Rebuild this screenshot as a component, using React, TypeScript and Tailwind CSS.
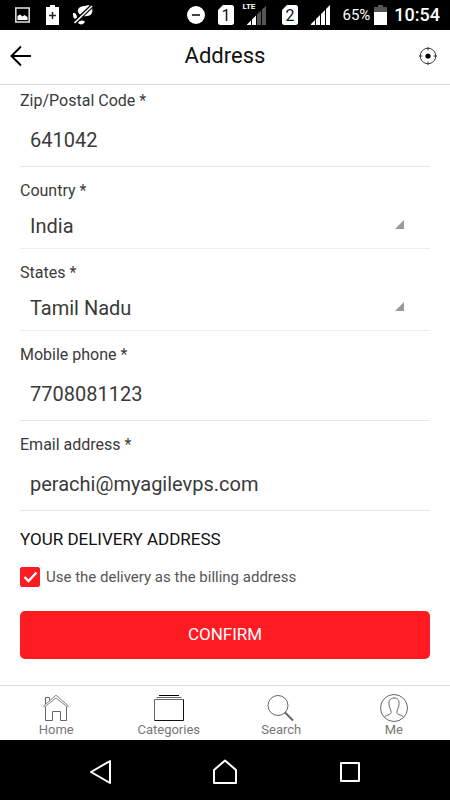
import { ReactNode } from "react";

function StatusBar() {
    return (
        <div className="flex h-[30px] items-center justify-between bg-black pl-[15px] pr-[10px] text-white">
            <div className="flex items-center">
                <svg className="h-[20px] w-[15px]" viewBox="0 0 15 20" fill="none">
                    <rect x="0.800" y="3" width="13.400" height="14" stroke="#d6d6d6" strokeWidth="1.600" />
                    <path d="M2.500 15V11L5 9.600L7.500 11.500L9.500 10L12.500 12V15Z" fill="#fff" />
                </svg>
                <svg className="ml-4 h-[20px] w-[13px]" viewBox="0 0 13 20">
                    <path d="M4 0H9V2H13V20H0V2H4Z" fill="#fff" />
                    <path d="M6.500 7V14M3 10.500H10" stroke="#222" strokeWidth="1.500" />
                </svg>
                <svg className="ml-[14px] h-[20px] w-[20px]" viewBox="0 0 20 20">
                    <path d="M5 7C4 3 8 1 12 1C14 0 17 0 19 2C20 7 19 11 14 11C11 12 7 11 5 7Z" fill="#fff" />
                    <path d="M0 8C3 8 4 10 4 13L2 14C0 13 0 11 0 8Z" fill="#fff" />
                    <path d="M5 18C7 15 10 15 12 17C10 20 7 20 5 18Z" fill="#fff" />
                    <path d="M1 18L19 1" stroke="#000" strokeWidth="4" />
                    <path d="M1.500 18L19 1" stroke="#fff" strokeWidth="1.600" />
                </svg>
            </div>
            <div className="flex items-center">
                <svg className="h-[18px] w-[18px]" viewBox="0 0 18 18">
                    <circle cx="9" cy="9" r="9" fill="#fff" />
                    <path d="M5 9H13" stroke="#111" strokeWidth="1.600" />
                </svg>
                <Sim number="1" />
                <div className="relative ml-2 h-[20px] w-[24px]">
                    <span className="absolute -top-[3px] left-0 text-[8px] font-bold leading-[10px]">LTE</span>
                    <svg className="absolute bottom-0 right-0 h-[19px] w-[19px]" viewBox="0 0 19 19">
                        <path d="M0 19V18.500L4 14.500V19ZM5 19V13.500L9 9.500V19Z" fill="#fff" />
                        <path d="M10 19V8.500L14 4.500V19ZM15 19V3.500L19 0V19Z" fill="#555" />
                    </svg>
                </div>
                <Sim number="2" wide />
                <svg className="ml-[13px] h-[20px] w-[19px]" viewBox="0 0 19 20">
                    <path d="M0 20V19L4 15V20ZM5 20V14L9 10V20ZM10 20V9L14 5V20ZM15 20V4L19 0V20Z" fill="#fff" />
                </svg>
                <span className="ml-3 text-[15px] leading-5">65%</span>
                <svg className="ml-1 h-[20px] w-[13px]" viewBox="0 0 13 20">
                    <path d="M4 0H9V2H13V8H0V2H4Z" fill="#555" />
                    <path d="M0 7H13V20H0Z" fill="#fff" />
                </svg>
                <span className="ml-[7px] text-lg font-medium leading-5">10:54</span>
            </div>
        </div>
    );
}

function Sim({ number, wide }: { number: string; wide?: boolean }) {
    return (
        <span className={wide ? "ml-4" : "ml-[13px]"}>
            <svg className="h-[20px] w-[16px]" viewBox="0 0 16 20">
                <path d="M5 0H13.500Q16 0 16 2.500V17.500Q16 20 13.500 20H2.500Q0 20 0 17.500V5Z" fill="#fff" />
                <text x="8" y="16" textAnchor="middle" fontSize="16" fill="#111">{number}</text>
            </svg>
        </span>
    );
}

function Header() {
    return (
        <header className="grid h-[55px] grid-cols-[1fr_auto_1fr] items-center border-b border-[#dcdcdc] px-[9px] pb-[2px]">
            <button type="button" aria-label="Back">
                <svg className="h-[24px] w-[24px]" viewBox="0 0 24 24" fill="none" stroke="#000" strokeWidth="2">
                    <path d="M22 12H3M12 2.500L2.500 12L12 21.500" />
                </svg>
            </button>
            <h1 className="text-[22px] leading-7 text-[#111]">Address</h1>
            <button type="button" aria-label="Locate me" className="justify-self-end pr-1">
                <svg className="h-[18px] w-[18px]" viewBox="0 0 18 18" fill="none" stroke="#111">
                    <circle cx="9" cy="9" r="7.800" strokeWidth="0.800" />
                    <circle cx="9" cy="9" r="2.600" fill="#000" stroke="none" />
                    <path d="M9 0V3.500M9 14.500V18M0 9H3.500M14.500 9H18" strokeWidth="0.800" />
                </svg>
            </button>
        </header>
    );
}

function Field({ id, label, value, type = "text" }: { id: string; label: string; value: string; type?: string }) {
    return (
        <div>
            <label htmlFor={id} className="block text-base leading-6">{label}</label>
            <input id={id} type={type} defaultValue={value} className="block h-[54px] w-full border-b border-[#e4e7ee] px-[10px] text-xl outline-none" />
        </div>
    );
}

function SelectField({ id, label, value }: { id: string; label: string; value: string }) {
    return (
        <div>
            <label htmlFor={id} className="block text-base leading-6">{label}</label>
            <div className="relative">
                <select id={id} defaultValue={value} className="block h-[46px] w-full appearance-none border-b border-[#ececec] px-[10px] text-xl outline-none">
                    <option>{value}</option>
                </select>
                <svg className="pointer-events-none absolute right-[26px] top-[17px] h-[9px] w-[9px]" viewBox="0 0 9 9">
                    <path d="M9 0V9H0Z" fill="#999" />
                </svg>
            </div>
        </div>
    );
}

function Tab({ label, children }: { label: string; children: ReactNode }) {
    return (
        <a href="#" className="flex flex-col items-center pt-2 text-[13px] leading-4 text-[#777]">
            <svg className="h-[28px] w-[32px]" viewBox="0 0 32 28" fill="none" stroke="#666">
                {children}
            </svg>
            {label}
        </a>
    );
}

function TabBar() {
    return (
        <nav className="grid h-[55px] grid-cols-4 border-t border-[#dcdcdc]">
            <Tab label="Home">
                <path d="M5.500 13V26.500H12.500V17.500H20.500V26.500H26.500V13" />
                <path d="M3.500 12L16 1.200L28.500 12L27.500 13L16 4L4.500 13Z" strokeWidth="0.800" />
                <path d="M5.500 10V3.500H9.500V6.500" />
            </Tab>
            <Tab label="Categories">
                <path d="M6 1.500H26" stroke="#000" />
                <path d="M3.500 3.500H28.500" />
                <path d="M1.500 26.500V5.500H30.500" />
                <path d="M30.500 5.500V26.500H1.500" stroke="#111" />
            </Tab>
            <Tab label="Search">
                <circle cx="13" cy="11.500" r="10" />
                <path d="M20 18.500L28 26.500" strokeWidth="2" />
            </Tab>
            <Tab label="Me">
                <circle cx="16" cy="14" r="13.500" />
                <path d="M6.500 23.500C7 21 13 21 13.200 18.500C13.200 16.500 11.500 14 11 11C10.500 6 12.500 4 16 4C19.500 4 21.500 6 21 11C20.500 14 18.800 16.500 18.800 18.500C19 21 25 21 25.500 23.500" />
            </Tab>
        </nav>
    );
}

function SystemNav() {
    return (
        <div className="grid h-[60px] grid-cols-3 items-center justify-items-center bg-black px-[38px] pt-1">
            <button type="button" aria-label="System back">
                <svg className="h-[26px] w-[26px]" viewBox="0 0 26 26" fill="none" stroke="#fff" strokeWidth="2" strokeLinejoin="round">
                    <path d="M23 2V24L4 13Z" />
                </svg>
            </button>
            <button type="button" aria-label="System home">
                <svg className="h-[26px] w-[26px]" viewBox="0 0 26 26" fill="none" stroke="#fff" strokeWidth="2" strokeLinejoin="round">
                    <path d="M2 24V11L13 1.500L24 11V24Z" />
                </svg>
            </button>
            <button type="button" aria-label="Recent apps">
                <svg className="h-[26px] w-[26px]" viewBox="0 0 26 26" fill="none" stroke="#fff" strokeWidth="2" strokeLinejoin="round">
                    <path d="M4 4H22V22H4Z" />
                </svg>
            </button>
        </div>
    );
}

export default function App() {
    return (
        <div className="flex min-h-screen flex-col bg-white font-['Roboto',sans-serif] text-[#3a3a3a]">
            <StatusBar />
            <Header />
            <form className="flex-1 px-5 pb-6 pt-1">
                <div className="flex flex-col gap-3">
                    <Field id="zip" label="Zip/Postal Code *" value="641042" />
                    <SelectField id="country" label="Country *" value="India" />
                    <SelectField id="state" label="States *" value="Tamil Nadu" />
                    <Field id="phone" label="Mobile phone *" value="7708081123" type="tel" />
                    <Field id="email" label="Email address *" value="perachi@myagilevps.com" type="email" />
                </div>
                <h2 className="mt-4 text-[17px] leading-6 text-[#111]">YOUR DELIVERY ADDRESS</h2>
                <label className="mt-4 flex items-center gap-[6px] text-[15px] leading-5 text-[#555]">
                    <span className="relative h-5 w-5">
                        <input type="checkbox" defaultChecked className="peer block h-5 w-5 appearance-none rounded-xs border border-[#ff1b22] checked:bg-[#ff1b22]" />
                        <svg className="pointer-events-none absolute inset-0 hidden h-5 w-5 peer-checked:block" viewBox="0 0 20 20" fill="none" stroke="#fff" strokeWidth="2.400">
                            <path d="M4.500 10L8.500 14L16.500 5.500" />
                        </svg>
                    </span>
                    Use the delivery as the billing address
                </label>
                <button type="button" className="mt-6 block h-12 w-full rounded-[5px] bg-[#ff1b22] text-[17px] text-white">CONFIRM</button>
            </form>
            <TabBar />
            <SystemNav />
        </div>
    );
}
